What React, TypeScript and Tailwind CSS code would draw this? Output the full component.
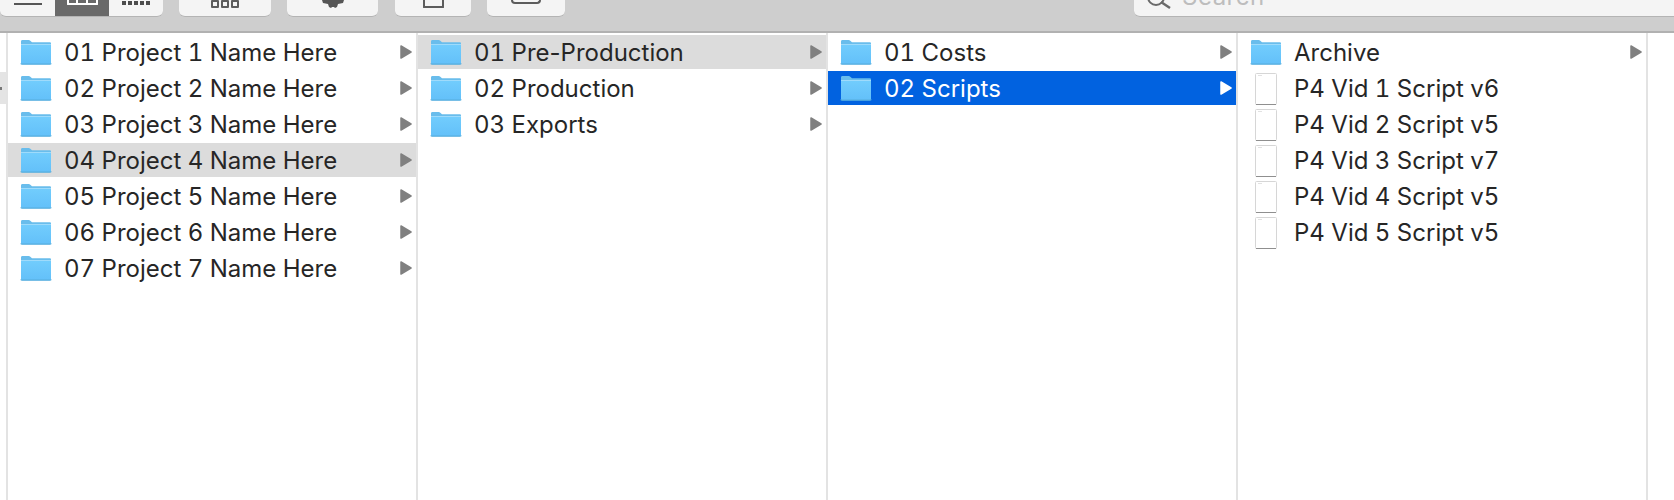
import type { ReactNode } from "react";

type Entry = { name: string; kind: "folder" | "file"; state?: "active" | "selected" };

const columns: Entry[][] = [
  [
    { name: "01 Project 1 Name Here", kind: "folder" },
    { name: "02 Project 2 Name Here", kind: "folder" },
    { name: "03 Project 3 Name Here", kind: "folder" },
    { name: "04 Project 4 Name Here", kind: "folder", state: "active" },
    { name: "05 Project 5 Name Here", kind: "folder" },
    { name: "06 Project 6 Name Here", kind: "folder" },
    { name: "07 Project 7 Name Here", kind: "folder" },
  ],
  [
    { name: "01 Pre-Production", kind: "folder", state: "active" },
    { name: "02 Production", kind: "folder" },
    { name: "03 Exports", kind: "folder" },
  ],
  [
    { name: "01 Costs", kind: "folder" },
    { name: "02 Scripts", kind: "folder", state: "selected" },
  ],
  [
    { name: "Archive", kind: "folder" },
    { name: "P4 Vid 1 Script v6", kind: "file" },
    { name: "P4 Vid 2 Script v5", kind: "file" },
    { name: "P4 Vid 3 Script v7", kind: "file" },
    { name: "P4 Vid 4 Script v5", kind: "file" },
    { name: "P4 Vid 5 Script v5", kind: "file" },
  ],
];

function FolderIcon({ id }: { id: string }) {
  return (
    <svg width="32" height="26" viewBox="0 0 32 26" className="mb-[1px] shrink-0">
      <defs>
        <linearGradient id={id} x1="0" y1="0" x2="0" y2="1">
          <stop offset="0" stopColor="#72cdfd" />
          <stop offset="1" stopColor="#63c0f9" />
        </linearGradient>
      </defs>
      <path d="M1 5V2.500C1 1.500 1.600 1 2.500 1h6.200c.7 0 1.100.2 1.600.7L12 3.200h17.600c.9 0 1.400.5 1.400 1.400V6H1z" fill="#69bdec" />
      <path d="M1 5h30v19c0 .7-.5 1.200-1.200 1.200H2.200C1.500 25.200 1 24.700 1 24V5z" fill={`url(#${id})`} />
      <path d="M1 24.200c0 .7.5 1 1.200 1h27.600c.7 0 1.200-.3 1.200-1" fill="none" stroke="#57aede" strokeWidth="1.200" />
      <rect x="1" y="5" width="30" height="1" fill="#9fdbfb" />
    </svg>
  );
}

function FileIcon() {
  return (
    <svg width="32" height="32" viewBox="0 0 32 32" className="mt-[2px] shrink-0">
      <rect x="5.500" y="0.500" width="21" height="31" rx="1" fill="#fff" stroke="#d6d6d6" />
      <path d="M6 31.500h20" stroke="#8f8f8f" />
      <path d="M8 2.500h4" stroke="#e2e2e2" />
    </svg>
  );
}

function ToolButton({ className, children }: { className: string; children: ReactNode }) {
  return (
    <div className={`${className} flex h-[17px] items-end justify-center overflow-hidden rounded-b-[6px] border-b border-b-[#b4b4b4] bg-[#f4f4f4]`}>
      {children}
    </div>
  );
}

function Toolbar() {
  return (
    <div className="flex h-[33px] shrink-0 items-start border-b-2 border-b-[#b1b1b1] bg-[#cecece]">
      <div className="flex h-[17px] w-[163px] overflow-hidden rounded-b-[6px] border-b border-b-[#b4b4b4] bg-[#f4f4f4]">
        <div className="flex w-[55px] items-start justify-center pt-[3px]">
          <div className="h-[2px] w-[28px] bg-[#555]" />
        </div>
        <div className="flex w-[54px] items-start justify-center bg-[#696969]">
          <div className="flex h-[5px] w-[31px] rounded-b-[1px] border-x-2 border-b-2 border-white">
            <div className="flex-1 border-r-2 border-r-white" />
            <div className="flex-1 border-r-2 border-r-white" />
            <div className="flex-1" />
          </div>
        </div>
        <div className="flex flex-1 items-start justify-center gap-[2px] pt-[1px]">
          {[0, 1, 2, 3, 4].map((i) => (
            <div key={i} className="h-[4px] w-[4px] bg-[#4c4c4c]" />
          ))}
        </div>
      </div>
      <ToolButton className="ml-[16px] w-[92px]">
        <div className="mb-[8px] flex gap-[2px]">
          {[0, 1, 2].map((i) => (
            <div key={i} className="h-[8px] w-[8px] rounded-[1px] border-2 border-[#5c5c5c]" />
          ))}
        </div>
      </ToolButton>
      <ToolButton className="ml-[16px] w-[91px]">
        <svg width="22" height="8" viewBox="0 0 22 8" className="mb-[8px]">
          <path d="M0 0h22l-1 3-5 1-1 3-2 1-1-1h-2l-1 1-2-1-1-3-5-1z" fill="#555" />
        </svg>
      </ToolButton>
      <ToolButton className="ml-[17px] w-[76px]">
        <div className="mb-[8px] h-[9px] w-[21px] rounded-b-[1px] border-x-2 border-b-2 border-[#5c5c5c]" />
      </ToolButton>
      <ToolButton className="ml-[16px] w-[78px]">
        <div className="mb-[12px] h-[5px] w-[30px] rounded-b-[4px] border-x-2 border-b-2 border-[#5c5c5c]" />
      </ToolButton>
      <div className="ml-[569px] flex h-[17px] flex-1 items-start overflow-hidden rounded-bl-[6px] border-b border-b-[#b4b4b4] bg-[#f4f4f4] pl-[12px]">
        <svg width="26" height="17" viewBox="0 0 26 17" className="shrink-0">
          <circle cx="10" cy="-3" r="8" fill="none" stroke="#6a6a6a" strokeWidth="2" />
          <path d="M15 2l9 6" stroke="#6a6a6a" strokeWidth="2.500" />
        </svg>
        <span className="ml-[10px] -mt-[17px] text-[24px] leading-[28px] tracking-[0.5px] text-[#bdbdbd]">Search</span>
      </div>
    </div>
  );
}

function Row({ entry, id }: { entry: Entry; id: string }) {
  const bg =
    entry.state === "selected" ? "bg-[#0162e0] text-white" : entry.state === "active" ? "bg-[#dcdcdc] text-[#262626]" : "text-[#262626]";
  // the hyphen stays out of tabular-nums, it gets too wide there
  const parts = entry.name.split("-");
  return (
    <div className={`mb-[2px] flex h-[34px] items-center pl-[12px] pr-[4px] ${bg}`}>
      <div className="flex w-[32px] items-center justify-center">
        {entry.kind === "folder" ? <FolderIcon id={id} /> : <FileIcon />}
      </div>
      <span className="mt-[2px] ml-[12px] flex-1 text-[24px] leading-[36px] tabular-nums">
        {parts[0]}
        {parts[1] && (
          <>
            <span className="normal-nums">-</span>
            {parts[1]}
          </>
        )}
      </span>
      {entry.kind === "folder" && (
        <svg width="12" height="14" viewBox="0 0 12 14" className="mb-[1px] shrink-0">
          <path
            d="M1 1l10 6-10 6z"
            fill={entry.state === "selected" ? "#fff" : "#808080"}
            stroke={entry.state === "selected" ? "#fff" : "#808080"}
            strokeWidth="1.500"
            strokeLinejoin="round"
          />
        </svg>
      )}
    </div>
  );
}

export default function App() {
  return (
    <div className="flex h-[500px] w-[1674px] flex-col overflow-hidden bg-white font-['Inter',sans-serif]">
      <Toolbar />
      <div className="flex min-h-0 flex-1">
        {/* collapsed sidebar with its drag handle */}
        <div className="w-[8px] shrink-0 border-r-2 border-r-[#e3e3e3] pt-[39px]">
          <div className="flex h-[32px] w-[6px] items-center bg-[#e4e4e4]">
            <div className="h-[3px] w-[2px] bg-[#777]" />
          </div>
        </div>
        {columns.map((entries, c) => (
          <div key={entries[0].name} className="w-[410px] shrink-0 border-r-2 border-r-[#e3e3e3] pt-[2px]">
            {entries.map((entry, r) => (
              <Row key={entry.name} entry={entry} id={`folder-${c}-${r}`} />
            ))}
          </div>
        ))}
      </div>
    </div>
  );
}
